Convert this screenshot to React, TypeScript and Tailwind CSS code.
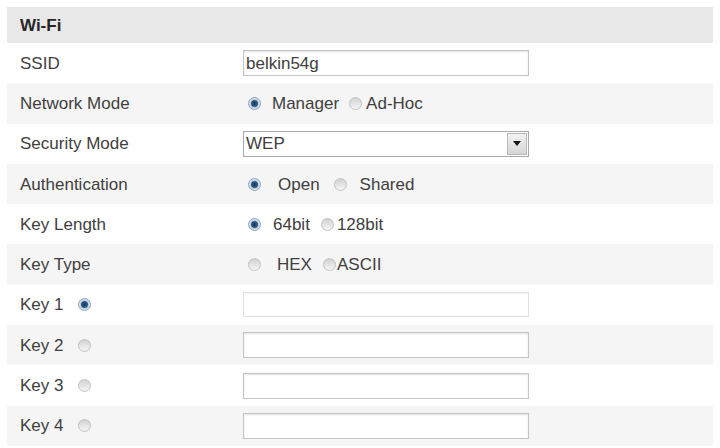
import React from 'react'

type Opt = { label: string; checked?: boolean; gap: string; after: string }

function Radio({ checked }: { checked?: boolean }) {
  if (checked) {
    return (
      <span className="inline-flex items-center justify-center w-[13px] h-[13px] rounded-full border border-[#8ea3b7] bg-radial from-[#c3d3e2] to-[#e9eff5] shrink-0">
        <span className="w-[7px] h-[7px] rounded-full bg-radial from-[#163c62] to-[#3d6e9c] shadow-[0_0_2px_#5d8bb5]" />
      </span>
    )
  }
  return (
    <span className="inline-block w-[13px] h-[13px] rounded-full border border-[#c2c2c2] bg-linear-to-b from-[#d2d2d2] to-[#f5f5f5] shrink-0" />
  )
}

function TextBox({ value, light }: { value?: string; light?: boolean }) {
  return (
    <div
      className={
        light
          ? 'w-[286px] h-[25px] border border-[#e0e0e0] shadow-[inset_0_1px_1px_rgba(0,0,0,0.05)] bg-white flex items-center px-[2px]'
          : 'w-[286px] h-[26px] border border-[#c4c4c4] shadow-[inset_0_1px_2px_rgba(0,0,0,0.12)] bg-white flex items-center px-[2px]'
      }
    >
      {value}
    </div>
  )
}

function Radios({ opts }: { opts: Opt[] }) {
  return (
    <div className="flex items-center pl-[5px]">
      {opts.map(o => (
        <React.Fragment key={o.label}>
          <Radio checked={o.checked} />
          <span className={o.gap + ' ' + o.after}>{o.label}</span>
        </React.Fragment>
      ))}
    </div>
  )
}

function Row({ label, gray, children }: { label: React.ReactNode; gray?: boolean; children: React.ReactNode }) {
  return (
    <div className={(gray ? 'bg-[#f5f5f5] ' : 'bg-white ') + 'h-[40.3px] flex items-center'}>
      <div className="w-[236px] pl-[13px] flex items-center shrink-0">{label}</div>
      {children}
    </div>
  )
}

function KeyLabel({ n, checked }: { n: number; checked?: boolean }) {
  return (
    <>
      <span>Key {n}</span>
      <span className="ml-[14px] flex">
        <Radio checked={checked} />
      </span>
    </>
  )
}

export default function App() {
  return (
    <div className="w-[720px] h-[448px] bg-white pt-[7px] px-[7px] font-['Liberation_Sans',Arial,sans-serif] text-[17px] text-[#404040] leading-none overflow-hidden">
      <div className="h-[36px] bg-[#e8e8e8] flex items-center pl-[13px] font-bold text-[#262626]">Wi-Fi</div>

      <Row label="SSID">
        <TextBox value="belkin54g" />
      </Row>
      <Row label="Network Mode" gray>
        <Radios
          opts={[
            { label: 'Manager', checked: true, gap: 'ml-[11px]', after: 'mr-[10px]' },
            { label: 'Ad-Hoc', gap: 'ml-[4px]', after: '' },
          ]}
        />
      </Row>
      <Row label="Security Mode">
        <div className="w-[286px] h-[26px] border border-[#a9a9a9] bg-white flex items-center justify-between pl-[2px] pr-[1px]">
          <span>WEP</span>
          <span className="w-[20px] h-[22px] border border-[#b8b8b8] bg-linear-to-b from-[#f2f2f2] to-[#d6d6d6] flex items-center justify-center">
            <svg width="8" height="5" viewBox="0 0 8 5">
              <path d="M0 0h8L4 5z" fill="#111" />
            </svg>
          </span>
        </div>
      </Row>
      <Row label="Authentication" gray>
        <Radios
          opts={[
            { label: 'Open', checked: true, gap: 'ml-[17px]', after: 'mr-[14px]' },
            { label: 'Shared', gap: 'ml-[13px]', after: '' },
          ]}
        />
      </Row>
      <Row label="Key Length">
        <Radios
          opts={[
            { label: '64bit', checked: true, gap: 'ml-[12px]', after: 'mr-[11px]' },
            { label: '128bit', gap: 'ml-[3px]', after: '' },
          ]}
        />
      </Row>
      <Row label="Key Type" gray>
        <Radios
          opts={[
            { label: 'HEX', gap: 'ml-[16px]', after: 'mr-[11px]' },
            { label: 'ASCII', gap: 'ml-[1px]', after: '' },
          ]}
        />
      </Row>
      <Row label={<KeyLabel n={1} checked />}>
        <TextBox light />
      </Row>
      <Row label={<KeyLabel n={2} />} gray>
        <TextBox />
      </Row>
      <Row label={<KeyLabel n={3} />}>
        <TextBox />
      </Row>
      <Row label={<KeyLabel n={4} />} gray>
        <TextBox />
      </Row>
    </div>
  )
}
